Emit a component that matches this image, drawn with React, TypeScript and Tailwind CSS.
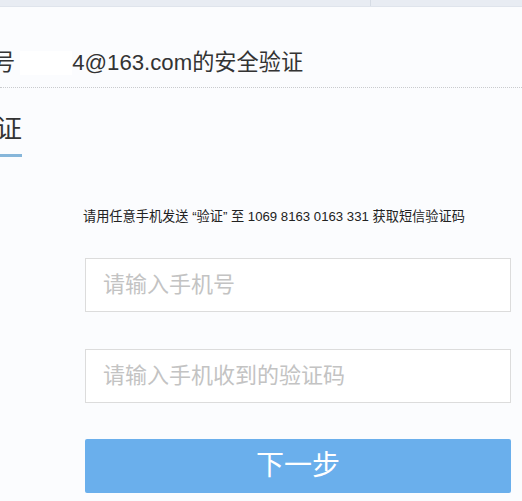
export default function App() {
  return (
    <div className="h-[501px] w-[522px] overflow-hidden bg-[#fbfcfe] font-['Liberation_Sans','Noto_Sans_CJK_SC',sans-serif] text-[#333]">
      {/* browser / page strip at the top */}
      <div className="flex h-[7px] border-b border-[#dfe4ec] bg-[#e8ecf3]">
        <div className="w-[371px] border-r border-[#d6dce5]" />
      </div>

      {/* account title */}
      <div className="border-b border-dotted border-[#c9cbce] pb-[9px] pt-[41px]">
        <div className="flex h-[30px] items-center whitespace-nowrap text-[22.2px] leading-[30px]">
          <span className="-ml-[7px]">号</span>
          <span className="ml-[5px] inline-block h-[24px] w-[52px] bg-white" />
          <span>4@163.com的安全验证</span>
        </div>
      </div>

      {/* tab */}
      <div className="mt-[24px] flex">
        <div className="-ml-[30px] border-b-[3px] border-[#86b6da] pb-[8px] text-[26px] leading-[34px] whitespace-nowrap">
          验证
        </div>
      </div>

      <p className="mt-[51px] pl-[83px] text-[13.2px] leading-[18px] whitespace-nowrap text-[#222]">
        请用任意手机发送 “验证” 至 1069 8163 0163 331 获取短信验证码
      </p>

      <form className="ml-[85px] w-[426px]" onSubmit={(e) => e.preventDefault()}>
        <input
          type="text"
          placeholder="请输入手机号"
          className="mt-[32px] block h-[54px] w-full border border-[#dcdcdc] bg-white px-[17px] text-[22px] outline-none placeholder:text-[#c3c3c3]"
        />
        <input
          type="text"
          placeholder="请输入手机收到的验证码"
          className="mt-[37px] block h-[54px] w-full border border-[#dcdcdc] bg-white px-[17px] text-[22px] outline-none placeholder:text-[#c3c3c3]"
        />
        <button
          type="submit"
          className="mt-[36px] block h-[54px] w-full rounded-[2px] bg-[#6aafec] text-[28px] text-white"
        >
          下一步
        </button>
      </form>
    </div>
  );
}
